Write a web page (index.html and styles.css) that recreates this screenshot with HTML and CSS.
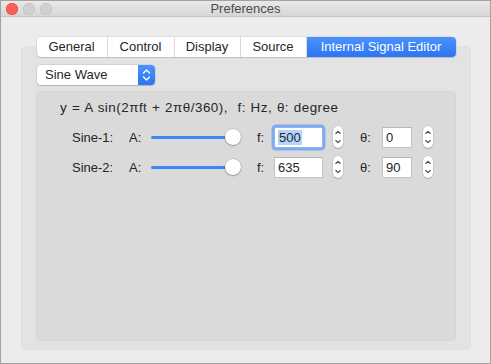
FILE: index.html
```html
<!DOCTYPE html>
<html>
<head>
<meta charset="utf-8">
<link rel="stylesheet" href="styles.css">
</head>
<body>
<div class="window">
  <div class="titlebar">
    <div class="lights">
      <span class="light red"></span>
      <span class="light"></span>
      <span class="light"></span>
    </div>
    <div class="title">Preferences</div>
  </div>
  <div class="tabview">
    <div class="tabs">
      <div class="tab w71">General</div>
      <div class="tab w67">Control</div>
      <div class="tab w66">Display</div>
      <div class="tab w66">Source</div>
      <div class="tab w149 active">Internal Signal Editor</div>
    </div>
    <div class="popup">
      <span class="popup-text">Sine Wave</span>
      <span class="popup-arrows">
        <svg width="17" height="20" viewBox="0 0 17 20"><path d="M5.5 8 L8.5 5 L11.5 8 M5.5 12 L8.5 15 L11.5 12" fill="none" stroke="#fff" stroke-width="1.4" stroke-linecap="round" stroke-linejoin="round"/></svg>
      </span>
    </div>
    <div class="panel">
      <div class="formula">y = A sin(2πft + 2πθ/360),  f: Hz, θ: degree</div>
      <div class="row">
        <span class="lbl name">Sine-1:</span>
        <span class="lbl a">A:</span>
        <div class="slider"><div class="track"></div><div class="knob"></div></div>
        <span class="lbl f">f:</span>
        <div class="field ffield focus"><span class="sel">500</span></div>
        <div class="stepper"><svg width="10" height="22" viewBox="0 0 10 22"><path d="M2.8 7.5 L5 5.3 L7.2 7.5 M2.8 14.5 L5 16.7 L7.2 14.5" fill="none" stroke="#4a4a4a" stroke-width="1.1" stroke-linecap="round" stroke-linejoin="round"/></svg></div>
        <span class="lbl t">θ:</span>
        <div class="field tfield">0</div>
        <div class="stepper s2"><svg width="10" height="22" viewBox="0 0 10 22"><path d="M2.8 7.5 L5 5.3 L7.2 7.5 M2.8 14.5 L5 16.7 L7.2 14.5" fill="none" stroke="#4a4a4a" stroke-width="1.1" stroke-linecap="round" stroke-linejoin="round"/></svg></div>
      </div>
      <div class="row">
        <span class="lbl name">Sine-2:</span>
        <span class="lbl a">A:</span>
        <div class="slider"><div class="track"></div><div class="knob"></div></div>
        <span class="lbl f">f:</span>
        <div class="field ffield">635</div>
        <div class="stepper"><svg width="10" height="22" viewBox="0 0 10 22"><path d="M2.8 7.5 L5 5.3 L7.2 7.5 M2.8 14.5 L5 16.7 L7.2 14.5" fill="none" stroke="#4a4a4a" stroke-width="1.1" stroke-linecap="round" stroke-linejoin="round"/></svg></div>
        <span class="lbl t">θ:</span>
        <div class="field tfield">90</div>
        <div class="stepper s2"><svg width="10" height="22" viewBox="0 0 10 22"><path d="M2.8 7.5 L5 5.3 L7.2 7.5 M2.8 14.5 L5 16.7 L7.2 14.5" fill="none" stroke="#4a4a4a" stroke-width="1.1" stroke-linecap="round" stroke-linejoin="round"/></svg></div>
      </div>
    </div>
  </div>
</div>
</body>
</html>
```
FILE: styles.css
```css
* { box-sizing: border-box; }
html, body { margin: 0; padding: 0; }
body {
  font-family: "Liberation Sans", Arial, sans-serif;
  font-size: 13px;
  color: #262626;
  background: #ffffff;
}
.window {
  width: 491px;
  height: 364px;
  border: 1px solid #a3a3a3;
  background: #ececec;
  display: flex;
  flex-direction: column;
}
.titlebar {
  height: 16px;
  flex: none;
  background: linear-gradient(#e9e9e9, #d6d6d6);
  border-bottom: 1px solid #c4c4c4;
  display: flex;
  align-items: center;
  position: relative;
}
.lights {
  display: flex;
  gap: 5px;
  padding-left: 5px;
}
.light {
  width: 12px;
  height: 12px;
  border-radius: 50%;
  background: #d0d0d0;
  box-shadow: inset 0 0 0 0.5px #bdbdbd;
}
.light.red {
  background: #fc5f57;
  box-shadow: inset 0 0 0 0.5px #e0443e;
}
.title {
  position: absolute;
  left: 0;
  right: 0;
  text-align: center;
  color: #4c4c4c;
  font-size: 13px;
  line-height: 16px;
}
.tabview {
  flex: 1;
  margin: 29px 19px 13px 20px;
  background: #e3e3e3;
  border-radius: 5px;
  box-shadow: inset 0 0 0 1px #dfdfdf;
  display: flex;
  flex-direction: column;
  padding: 0 15px 9px 15px;
}
.tabs {
  display: flex;
  align-self: center;
  margin-top: -9px;
  height: 20px;
  background: #fff;
  border-radius: 4px;
  box-shadow: 0 0 0 0.5px rgba(0,0,0,0.12), 0 1px 1px rgba(0,0,0,0.12);
}
.tab {
  height: 20px;
  line-height: 20px;
  text-align: center;
  color: #262626;
  border-right: 1px solid #dadada;
}
.tab.active {
  border-right: none;
  color: #fff;
  background: linear-gradient(#4b93fa, #2c75f4);
  border-radius: 0 4px 4px 0;
}
.w71 { width: 71px; }
.w67 { width: 67px; }
.w66 { width: 66px; }
.w149 { width: 149px; }
.popup {
  margin-top: 8px;
  margin-left: 1px;
  width: 118px;
  height: 20px;
  display: flex;
  background: #fff;
  border-radius: 4px;
  box-shadow: 0 0 0 0.5px rgba(0,0,0,0.15), 0 1px 1px rgba(0,0,0,0.15);
}
.popup-text {
  flex: 1;
  padding-left: 8px;
  line-height: 20px;
  color: #262626;
}
.popup-arrows {
  width: 17px;
  height: 20px;
  background: linear-gradient(#4b93fa, #2c75f4);
  border-radius: 0 4px 4px 0;
  display: flex;
}
.panel {
  flex: 1;
  margin-top: 6px;
  background: #dadada;
  border-radius: 5px;
  box-shadow: inset 0 0 0 1px #d6d6d6;
  padding: 9px 0 0 24px;
}
.formula {
  white-space: pre;
  line-height: 16px;
  font-size: 13.4px;
  letter-spacing: 0.5px;
  word-spacing: 0.5px;
  color: #262626;
  margin-bottom: 6px;
}
.row {
  height: 30px;
  display: flex;
  align-items: center;
  padding-left: 12px;
}
.lbl { color: #262626; }
.name { width: 57px; }
.a { width: 22px; }
.f { width: 17px; margin-left: 16px; }
.t { width: 22px; margin-left: 17px; }
.slider {
  width: 90px;
  height: 16px;
  position: relative;
  display: flex;
  align-items: center;
}
.track {
  width: 82px;
  height: 3px;
  border-radius: 2px;
  background: #3f87f6;
}
.knob {
  position: absolute;
  left: 74px;
  top: 0;
  width: 16px;
  height: 16px;
  border-radius: 50%;
  background: #fff;
  box-shadow: 0 0 0 0.5px rgba(0,0,0,0.22), 0 1px 1.5px rgba(0,0,0,0.25);
}
.field {
  height: 21px;
  background: #fff;
  border: 1px solid #c3c3c3;
  border-top-color: #b5b5b5;
  padding-left: 3px;
  line-height: 19px;
  color: #262626;
}
.ffield { width: 49px; }
.tfield { width: 30px; }
.field.focus {
  border-color: #8fb4ee;
  box-shadow: 0 0 0 2.5px #82aaf0;
  border-radius: 2px;
}
.sel {
  background: #b3d4fc;
  padding: 0 1px;
}
.stepper {
  width: 10px;
  height: 22px;
  margin-left: 10px;
  background: #fff;
  border-radius: 5px;
  box-shadow: 0 0 0 0.5px rgba(0,0,0,0.15), 0 1px 1px rgba(0,0,0,0.15);
  display: flex;
}
.stepper.s2 { margin-left: 11px; }
```
